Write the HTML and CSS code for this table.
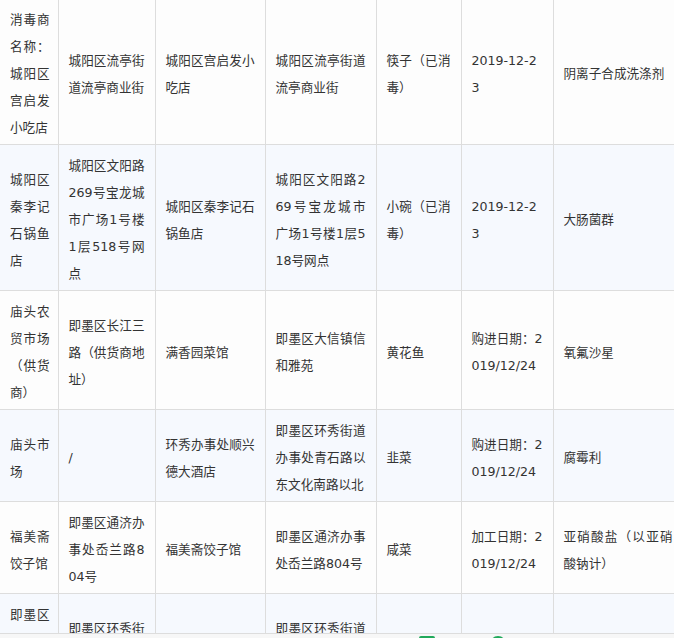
FILE: index.html
```html
<!DOCTYPE html>
<html lang="zh-CN">
<head>
<meta charset="utf-8">
<title>抽检结果</title>
<link rel="stylesheet" href="styles.css">
</head>
<body>
<table class="tbl">
  <colgroup>
    <col class="c1"><col class="c2"><col class="c3"><col class="c4"><col class="c5"><col class="c6"><col class="c7">
  </colgroup>
  <tbody>
    <tr>
      <td>消毒商名称：城阳区宫启发小吃店</td>
      <td>城阳区流亭街道流亭商业街</td>
      <td>城阳区宫启发小吃店</td>
      <td>城阳区流亭街道流亭商业街</td>
      <td>筷子（已消毒）</td>
      <td>2019-12-23</td>
      <td>阴离子合成洗涤剂</td>
    </tr>
    <tr>
      <td>城阳区秦李记石锅鱼店</td>
      <td>城阳区文阳路269号宝龙城市广场1号楼1层518号网点</td>
      <td>城阳区秦李记石锅鱼店</td>
      <td>城阳区文阳路269号宝龙城市广场1号楼1层518号网点</td>
      <td>小碗（已消毒）</td>
      <td>2019-12-23</td>
      <td>大肠菌群</td>
    </tr>
    <tr>
      <td>庙头农贸市场（供货商）</td>
      <td>即墨区长江三路（供货商地址）</td>
      <td>满香园菜馆</td>
      <td>即墨区大信镇信和雅苑</td>
      <td>黄花鱼</td>
      <td>购进日期：2019/12/24</td>
      <td>氧氟沙星</td>
    </tr>
    <tr>
      <td>庙头市场</td>
      <td>/</td>
      <td>环秀办事处顺兴德大酒店</td>
      <td>即墨区环秀街道办事处青石路以东文化南路以北</td>
      <td>韭菜</td>
      <td>购进日期：2019/12/24</td>
      <td>腐霉利</td>
    </tr>
    <tr>
      <td>福美斋饺子馆</td>
      <td>即墨区通济办事处岙兰路804号</td>
      <td>福美斋饺子馆</td>
      <td>即墨区通济办事处岙兰路804号</td>
      <td>咸菜</td>
      <td>加工日期：2019/12/24</td>
      <td>亚硝酸盐（以亚硝酸钠计）</td>
    </tr>
    <tr>
      <td>即墨区环秀街道和顺饭店</td>
      <td>即墨区环秀街道鹤山路以东南关村</td>
      <td></td>
      <td>即墨区环秀街道鹤山路以东南关村北侧</td>
      <td></td>
      <td></td>
      <td></td>
    </tr>
  </tbody>
</table>
<div class="dock">
  <span class="dock-icon dock-rect"></span>
  <span class="dock-icon dock-circle"></span>
</div>
</body>
</html>
```

FILE: styles.css
```css
html, body {
  margin: 0;
  padding: 0;
  overflow: hidden;
  background: #ffffff;
}

body {
  font-family: "DejaVu Sans", "Noto Sans CJK SC", sans-serif;
  font-size: 12.6px;
  line-height: 27px;
  color: #333333;
}

.tbl {
  border-collapse: collapse;
  table-layout: fixed;
  width: 683px;
  margin-top: -1px;
}

.c1 { width: 58px; }
.c2 { width: 97px; }
.c3 { width: 110px; }
.c4 { width: 111px; }
.c5 { width: 85px; }
.c6 { width: 92px; }
.c7 { width: 130px; }

.tbl td {
  border: 1px solid #dddddd;
  padding: 7px 10px 3px;
  text-align: justify;
  vertical-align: middle;
  word-break: break-all;
}

.tbl tr:first-child td { border-top: none; }
.tbl td:first-child {
  border-left: none;
  padding-right: 8px;
}

.tbl tr:nth-child(odd) td { background: #fdfdfd; }
.tbl tr:nth-child(even) td { background: #f6f9fe; }

.dock {
  position: fixed;
  left: 0;
  right: 0;
  top: 633px;
  height: 40px;
  background: #f7f7f7;
  border-top: 1px solid #dddddd;
  display: flex;
  align-items: flex-start;
  padding: 2px 0 0 419px;
  gap: 55px;
}

.dock-icon {
  display: block;
  background: #21a95b;
}

.dock-rect {
  width: 16px;
  height: 14px;
  border-radius: 2px;
}

.dock-circle {
  width: 16px;
  height: 16px;
  border-radius: 50%;
}
```
